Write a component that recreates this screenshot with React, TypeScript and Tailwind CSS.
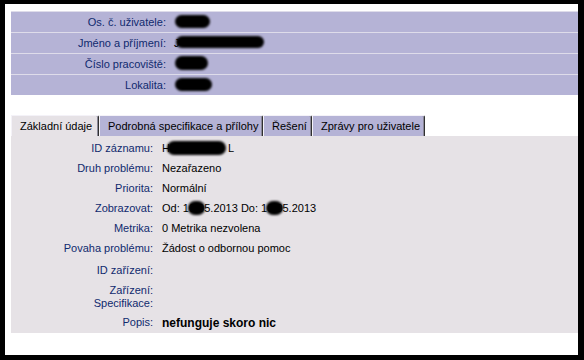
import React from "react";

const F = "font-['Liberation_Sans',Arial,sans-serif]";

function HeaderRow({ label, children, last }: { label: string; children?: React.ReactNode; last?: boolean }) {
  return (
    <div className={`flex items-center bg-[#b5b3d6] ${last ? "h-[20px]" : "h-[21px] border-b border-[#dedcea]"}`}>
      <div className="w-[155px] text-right text-[#102a6e] text-[11px] leading-none">{label}</div>
      <div className="relative ml-[8px] h-full flex-1 text-[11px] leading-none flex items-center">{children}</div>
    </div>
  );
}

function Row({ label, h, children, labelLines }: { label?: string; h: string; children?: React.ReactNode; labelLines?: string[] }) {
  return (
    <div className={`flex items-center ${h}`}>
      <div className="w-[142px] text-right text-[#102a6e] text-[11px] leading-[13px]">
        {labelLines ? labelLines.map((l) => <div key={l}>{l}</div>) : label}
      </div>
      <div className="ml-[9px] flex-1 text-black text-[11px] leading-none flex items-center">{children}</div>
    </div>
  );
}

function Tab({ children, active, w }: { children: React.ReactNode; active?: boolean; w: string }) {
  return (
    <div
      className={`${w} h-[21px] flex items-center pl-[8px] text-[11px] leading-none text-black rounded-tr-[2px] border-t border-l border-t-[#f4f2f8] border-l-[#f4f2f8] border-r border-r-[#303030] shadow-[inset_-1px_0_0_#8a8898] ${
        active ? "bg-[#e6e2e6]" : "bg-[#b5b3d6]"
      }`}
    >
      {children}
    </div>
  );
}

export default function App() {
  return (
    <div className={`w-[584px] h-[360px] bg-black pt-[4px] pl-[5px] pr-[6px] pb-[5px] ${F}`}>
      <div className="w-[573px] h-[351px] bg-white pt-[7px] pl-[6px]">
        {/* header */}
        <div className="border-t border-[#dedcea]">
          <HeaderRow label="Os. č. uživatele:">
            <span className="absolute left-[1px] top-[3px] w-[35px] h-[13px] rounded-full bg-black blur-[1px]" />
          </HeaderRow>
          <HeaderRow label="Jméno a příjmení:">
            <span className="text-black">J</span>
            <span className="absolute left-[2px] top-[3px] w-[88px] h-[12px] rounded-full bg-black blur-[1px]" />
          </HeaderRow>
          <HeaderRow label="Číslo pracoviště:">
            <span className="absolute left-[1px] top-[2px] w-[33px] h-[14px] rounded-full bg-black blur-[1px]" />
          </HeaderRow>
          <HeaderRow label="Lokalita:" last>
            <span className="absolute left-[1px] top-[3px] w-[37px] h-[13px] rounded-full bg-black blur-[1px]" />
          </HeaderRow>
        </div>

        {/* tabs */}
        <div className="mt-[20px] flex items-end">
          <Tab active w="w-[88px]">Základní údaje</Tab>
          <Tab w="w-[164px]">Podrobná specifikace a přílohy</Tab>
          <Tab w="w-[49px]">Řešení</Tab>
          <Tab w="w-[113px]">Zprávy pro uživatele</Tab>
        </div>

        {/* content */}
        <div className="bg-[#e6e2e6] h-[197px] pt-[2px]">
          <Row label="ID záznamu:" h="h-[20px]">
            <span className="relative">
              H<span className="inline-block w-[58px]" />L
              <span className="absolute left-[5px] top-[-2px] w-[59px] h-[14px] rounded-full bg-black blur-[1px]" />
            </span>
          </Row>
          <Row label="Druh problému:" h="h-[20px]">Nezařazeno</Row>
          <Row label="Priorita:" h="h-[20px]">Normální</Row>
          <Row label="Zobrazovat:" h="h-[20px]">
            <span className="whitespace-pre">Od: 1</span>
            <span className="relative whitespace-pre">
              0.0
              <span className="absolute left-[-1px] top-[-2px] w-[17px] h-[14px] rounded-full bg-black blur-[1px]" />
            </span>
            <span className="whitespace-pre">5.2013 Do: 1</span>
            <span className="relative whitespace-pre">
              0.0
              <span className="absolute left-[-1px] top-[-2px] w-[17px] h-[14px] rounded-full bg-black blur-[1px]" />
            </span>
            <span>5.2013</span>
          </Row>
          <Row label="Metrika:" h="h-[20px]">0 Metrika nezvolena</Row>
          <Row label="Povaha problému:" h="h-[21px]">Žádost o odbornou pomoc</Row>
          <Row label="ID zařízení:" h="h-[22px]" />
          <Row labelLines={["Zařízení:", "Specifikace:"]} h="h-[31px]" />
          <Row label="Popis:" h="h-[21px]">
            <span className="font-bold text-[12px]">nefunguje skoro nic</span>
          </Row>
        </div>
      </div>
    </div>
  );
}
